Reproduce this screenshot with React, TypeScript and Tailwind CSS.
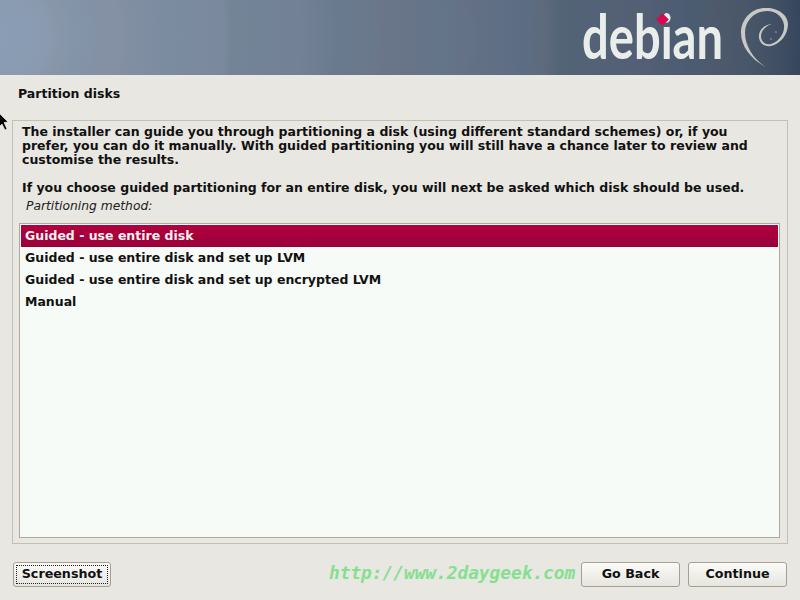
const sans = "font-['DejaVu_Sans',sans-serif]";

function Btn({ label, focus, w }: { label: string; focus?: boolean; w: string }) {
  return (
    <button className={`${w} h-[25px] rounded-[3px] border border-[#a89f8f] bg-gradient-to-b from-[#fafaf8] to-[#e6e5df] p-[2px] text-[12.7px] font-bold text-[#111]`}>
      <span className={`flex h-full w-full items-center justify-center ${focus ? "border border-dotted border-[#222]" : ""}`}>
        <span className="mb-[2px]">{label}</span>
      </span>
    </button>
  );
}

function Row({ label, selected }: { label: string; selected?: boolean }) {
  return (
    <div className={`flex h-[22px] items-center pl-[4px] text-[12.5px] font-bold ${selected ? "bg-gradient-to-b from-[#b3003f] to-[#98003a] text-[#f4f0ee]" : "text-[#111]"}`}>
      {label}
    </div>
  );
}

export default function App() {
  return (
    <div className={`relative flex h-[600px] w-[800px] flex-col overflow-hidden bg-[#e8e7e1] ${sans}`}>
      <header className="relative flex h-[75px] shrink-0 items-start justify-end bg-[radial-gradient(circle_at_0px_37px,#8a9db5_0px,#8a9bb1_46px,#8896a9_60px,#8394a8_82px,#8391a6_97px,#8490a3_118px,#7e8da2_150px,#7c8ca0_165px,#7a899e_225px,#748497_232px,#728196_300px,#6a7a8e_340px,#6a788b_375px,#6a7588_385px,#637489_450px,#647186_465px,#5c6d83_525px,#5e6a7c_545px,#536477_560px,#535f74_640px,#4b5c72_690px,#4e5a6c_715px,#485669_750px,#3f4e63_780px,#36465c_800px)]">
        <div className="relative h-[75px] w-[147px]">
          <span className="absolute left-[-1px] top-[1px] origin-left scale-x-[0.76] whitespace-nowrap font-['Lato',sans-serif] text-[62px] font-bold leading-[68px] text-[#e9eeea]">debian</span>
          <span className="absolute left-[75px] top-[15px] h-[9px] w-[9px] rotate-45 bg-[#d70751]" />
        </div>
        <svg width="70" height="75" viewBox="0 0 70 75" className="shrink-0">
          <path d="M36 67 C22 60 11 47 11 33 C11 18 23 7 37 8 C48 8 58 15 58 24 C58 35 50 44 41 46 C35 47 30 44 29 38 C28 31 33 25 42 24 C35 26 31 31 31 37 C32 43 36 45 41 44 C48 42 55 34 54 25 C53 17 46 11 37 11 C25 11 15 20 15 33 C15 46 24 60 36 67 Z" fill="#c8c8c6" />
          <circle cx="46" cy="32" r="0.8" fill="#a9adb0" />
          <circle cx="41" cy="39" r="0.8" fill="#a9adb0" />
        </svg>
      </header>

      <div className="flex h-[45px] shrink-0 items-center pb-[7px] pl-[18px] text-[12.5px] font-bold text-[#111]">Partition disks</div>

      <main className="ml-[12px] flex h-[424px] w-[776px] shrink-0 flex-col border border-[#c4bfb0] pb-[5px] pl-[6px] pr-[7px]">
        <div className="pl-[3px] pt-[4px] text-[12.5px] font-bold leading-[14px] text-[#111]">
          <p className="whitespace-nowrap">The installer can guide you through partitioning a disk (using different standard schemes) or, if you</p>
          <p className="whitespace-nowrap">prefer, you can do it manually. With guided partitioning you will still have a chance later to review and</p>
          <p className="whitespace-nowrap">customise the results.</p>
          <p className="mt-[14px] whitespace-nowrap">If you choose guided partitioning for an entire disk, you will next be asked which disk should be used.</p>
        </div>
        <div className="ml-[7px] mt-[4px] h-[15px] text-[12.3px] italic leading-[15px] text-[#222]">Partitioning method:</div>
        <div className="mt-[9px] min-h-0 flex-1 border border-[#b0a998] bg-[#f6fbf7] p-px">
          <Row label="Guided - use entire disk" selected />
          <Row label="Guided - use entire disk and set up LVM" />
          <Row label="Guided - use entire disk and set up encrypted LVM" />
          <Row label="Manual" />
        </div>
      </main>

      <footer className="mt-[18px] flex items-start px-[13px]">
        <Btn label="Screenshot" focus w="w-[98px]" />
        <span className="ml-[218px] w-[252px] whitespace-nowrap font-['DejaVu_Sans_Mono',monospace] text-[17.8px] font-bold italic leading-[22px] text-[#84e08f]">http://www.2daygeek.com</span>
        <Btn label="Go Back" w="w-[99px]" />
        <span className="w-[8px]" />
        <Btn label="Continue" w="w-[99px]" />
      </footer>

      <svg width="10" height="18" viewBox="0 0 10 18" className="absolute left-0 top-[113px]">
        <path d="M-1 0 L8 9 L4 9.5 L7 16 L5 17 L2 11 L-1 14 Z" fill="#000" stroke="#fff" strokeWidth="0.6" />
      </svg>
    </div>
  );
}
